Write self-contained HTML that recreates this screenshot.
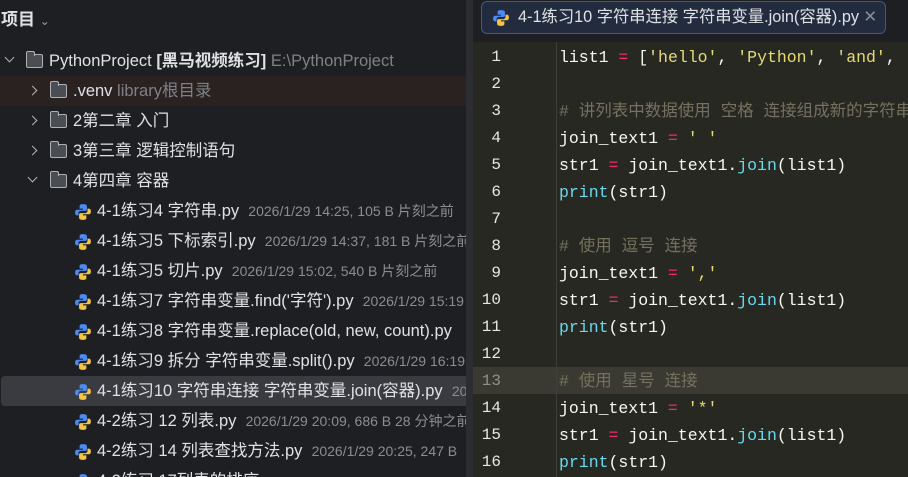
<!DOCTYPE html>
<html><head><meta charset="utf-8"><style>
*{margin:0;padding:0;box-sizing:border-box}
body{width:908px;height:477px;overflow:hidden;background:#1e1f22;font-family:"Liberation Sans","Noto Sans CJK SC",sans-serif;color:#dfe1e5;position:relative}
.left{position:absolute;left:0;top:0;width:466px;height:477px;background:#1e1f22;overflow:hidden}
.div{position:absolute;left:466px;top:0;width:7px;height:477px;background:#2b2d30}
.hdr{position:absolute;left:1px;top:5px;font-size:17px;font-weight:bold;color:#dfe1e5}
.row{position:absolute;left:0;width:466px;height:30px;font-size:16.5px;line-height:30px;white-space:nowrap;overflow:hidden}
.row .t{position:absolute;top:0}
.g{color:#8a8d93;font-size:14px}
.gl{color:#7e8187}
.chev{position:absolute;top:11px;width:7px;height:7px;border-right:1.5px solid #b0b3b8;border-bottom:1.5px solid #b0b3b8}
.r{transform:rotate(-45deg)}.d{transform:rotate(45deg);top:8px}
.fold{position:absolute;top:8px;width:17px;height:14px;border:1.5px solid #aeb1b6;border-radius:2px;background:#4a4d52}
.fold:before{content:"";position:absolute;left:-1.5px;top:-4px;width:7px;height:4px;border:1.5px solid #aeb1b6;border-bottom:none;border-radius:2px 2px 0 0;background:#4a4d52}
.py{position:absolute;top:7px;width:18px;height:18px}
.tab{position:absolute;left:481px;top:1px;width:405px;height:33px;background:#232c3f;border:1px solid #3b5a8c;border-radius:6px;font-size:16.3px;line-height:31px;color:#dfe1e5;padding-left:36px;white-space:nowrap}
.tab .x{position:absolute;right:8px;top:0;color:#8b8e94}
.ed{position:absolute;left:473px;top:42px;width:435px;height:435px;background:#272822}
.gut{position:absolute;left:556px;top:42px;width:1px;height:435px;background:#3e3f3a}
.cur{position:absolute;left:473px;top:367px;width:435px;height:27px;background:#3b3a32}
.ln{position:absolute;width:40px;text-align:right;left:461px;font-family:"Liberation Mono",monospace;font-size:16px;color:#e8e8e3;line-height:27px}
.code{position:absolute;left:559px;font-family:"Liberation Mono","Noto Sans CJK SC",monospace;font-size:16.5px;line-height:27px;color:#f8f8f2;white-space:pre}
.op{color:#f92672}.s{color:#e6db74}.f{color:#66d9ef}.c{color:#75715e}
</style></head><body>
<div class="left">
<div class="hdr">项目 <span style="font-weight:normal;color:#9da0a6;font-size:12px">&#8964;</span></div>
<div class="row" style="top:46px"><span class="chev d" style="left:6px"></span><span class="fold" style="left:26px"></span><span class="t" style="left:49px">PythonProject <b>[黑马视频练习]</b> <span class="gl">E:\PythonProject</span></span></div>
<div class="row" style="top:76px;background:#2a2220"><span class="chev r" style="left:29px"></span><span class="fold" style="left:50px"></span><span class="t" style="left:73px">.venv <span class="gl">library根目录</span></span></div>
<div class="row" style="top:106px"><span class="chev r" style="left:29px"></span><span class="fold" style="left:50px"></span><span class="t" style="left:73px">2第二章 入门</span></div>
<div class="row" style="top:136px"><span class="chev r" style="left:29px"></span><span class="fold" style="left:50px"></span><span class="t" style="left:73px">3第三章 逻辑控制语句</span></div>
<div class="row" style="top:166px"><span class="chev d" style="left:29px"></span><span class="fold" style="left:50px"></span><span class="t" style="left:73px">4第四章 容器</span></div>
<div class="row" style="top:196px"><svg class="py" style="left:74px" viewBox="0 0 16 16"><path d="M8 1C5 1 5 2 5 3v2h3v1H3C1.5 6 1 7 1 8.5S1.5 11 3 11h1V9c0-1 1-2 2-2h4c1 0 1.5-.5 1.5-1.5V3C11.5 1.5 10 1 8 1z" fill="#4b8bf5"/><path d="M8 15c3 0 3-1 3-2v-2H8v-1h5c1.5 0 2-1 2-2.5S14.5 5 13 5h-1v2c0 1-1 2-2 2H6c-1 0-1.5.5-1.5 1.5V13c0 1.5 1.5 2 3.5 2z" fill="#f4c542"/></svg><span class="t" style="left:97px">4-1练习4 字符串.py &nbsp;<span class="g">2026/1/29 14:25, 105 B 片刻之前</span></span></div>
<div class="row" style="top:226px"><svg class="py" style="left:74px" viewBox="0 0 16 16"><path d="M8 1C5 1 5 2 5 3v2h3v1H3C1.5 6 1 7 1 8.5S1.5 11 3 11h1V9c0-1 1-2 2-2h4c1 0 1.5-.5 1.5-1.5V3C11.5 1.5 10 1 8 1z" fill="#4b8bf5"/><path d="M8 15c3 0 3-1 3-2v-2H8v-1h5c1.5 0 2-1 2-2.5S14.5 5 13 5h-1v2c0 1-1 2-2 2H6c-1 0-1.5.5-1.5 1.5V13c0 1.5 1.5 2 3.5 2z" fill="#f4c542"/></svg><span class="t" style="left:97px">4-1练习5 下标索引.py &nbsp;<span class="g">2026/1/29 14:37, 181 B 片刻之前</span></span></div>
<div class="row" style="top:256px"><svg class="py" style="left:74px" viewBox="0 0 16 16"><path d="M8 1C5 1 5 2 5 3v2h3v1H3C1.5 6 1 7 1 8.5S1.5 11 3 11h1V9c0-1 1-2 2-2h4c1 0 1.5-.5 1.5-1.5V3C11.5 1.5 10 1 8 1z" fill="#4b8bf5"/><path d="M8 15c3 0 3-1 3-2v-2H8v-1h5c1.5 0 2-1 2-2.5S14.5 5 13 5h-1v2c0 1-1 2-2 2H6c-1 0-1.5.5-1.5 1.5V13c0 1.5 1.5 2 3.5 2z" fill="#f4c542"/></svg><span class="t" style="left:97px">4-1练习5 切片.py &nbsp;<span class="g">2026/1/29 15:02, 540 B 片刻之前</span></span></div>
<div class="row" style="top:286px"><svg class="py" style="left:74px" viewBox="0 0 16 16"><path d="M8 1C5 1 5 2 5 3v2h3v1H3C1.5 6 1 7 1 8.5S1.5 11 3 11h1V9c0-1 1-2 2-2h4c1 0 1.5-.5 1.5-1.5V3C11.5 1.5 10 1 8 1z" fill="#4b8bf5"/><path d="M8 15c3 0 3-1 3-2v-2H8v-1h5c1.5 0 2-1 2-2.5S14.5 5 13 5h-1v2c0 1-1 2-2 2H6c-1 0-1.5.5-1.5 1.5V13c0 1.5 1.5 2 3.5 2z" fill="#f4c542"/></svg><span class="t" style="left:97px">4-1练习7 字符串变量.find('字符').py &nbsp;<span class="g">2026/1/29 15:19</span></span></div>
<div class="row" style="top:316px"><svg class="py" style="left:74px" viewBox="0 0 16 16"><path d="M8 1C5 1 5 2 5 3v2h3v1H3C1.5 6 1 7 1 8.5S1.5 11 3 11h1V9c0-1 1-2 2-2h4c1 0 1.5-.5 1.5-1.5V3C11.5 1.5 10 1 8 1z" fill="#4b8bf5"/><path d="M8 15c3 0 3-1 3-2v-2H8v-1h5c1.5 0 2-1 2-2.5S14.5 5 13 5h-1v2c0 1-1 2-2 2H6c-1 0-1.5.5-1.5 1.5V13c0 1.5 1.5 2 3.5 2z" fill="#f4c542"/></svg><span class="t" style="left:97px">4-1练习8 字符串变量.replace(old, new, count).py</span></div>
<div class="row" style="top:346px"><svg class="py" style="left:74px" viewBox="0 0 16 16"><path d="M8 1C5 1 5 2 5 3v2h3v1H3C1.5 6 1 7 1 8.5S1.5 11 3 11h1V9c0-1 1-2 2-2h4c1 0 1.5-.5 1.5-1.5V3C11.5 1.5 10 1 8 1z" fill="#4b8bf5"/><path d="M8 15c3 0 3-1 3-2v-2H8v-1h5c1.5 0 2-1 2-2.5S14.5 5 13 5h-1v2c0 1-1 2-2 2H6c-1 0-1.5.5-1.5 1.5V13c0 1.5 1.5 2 3.5 2z" fill="#f4c542"/></svg><span class="t" style="left:97px">4-1练习9 拆分 字符串变量.split().py &nbsp;<span class="g">2026/1/29 16:19</span></span></div>
<div class="row" style="top:376px;left:1px;width:465px;background:#393b40;border-radius:4px 0 0 4px"><svg class="py" style="left:73px" viewBox="0 0 16 16"><path d="M8 1C5 1 5 2 5 3v2h3v1H3C1.5 6 1 7 1 8.5S1.5 11 3 11h1V9c0-1 1-2 2-2h4c1 0 1.5-.5 1.5-1.5V3C11.5 1.5 10 1 8 1z" fill="#4b8bf5"/><path d="M8 15c3 0 3-1 3-2v-2H8v-1h5c1.5 0 2-1 2-2.5S14.5 5 13 5h-1v2c0 1-1 2-2 2H6c-1 0-1.5.5-1.5 1.5V13c0 1.5 1.5 2 3.5 2z" fill="#f4c542"/></svg><span class="t" style="left:96px">4-1练习10 字符串连接 字符串变量.join(容器).py &nbsp;<span class="g">2026</span></span></div>
<div class="row" style="top:406px"><svg class="py" style="left:74px" viewBox="0 0 16 16"><path d="M8 1C5 1 5 2 5 3v2h3v1H3C1.5 6 1 7 1 8.5S1.5 11 3 11h1V9c0-1 1-2 2-2h4c1 0 1.5-.5 1.5-1.5V3C11.5 1.5 10 1 8 1z" fill="#4b8bf5"/><path d="M8 15c3 0 3-1 3-2v-2H8v-1h5c1.5 0 2-1 2-2.5S14.5 5 13 5h-1v2c0 1-1 2-2 2H6c-1 0-1.5.5-1.5 1.5V13c0 1.5 1.5 2 3.5 2z" fill="#f4c542"/></svg><span class="t" style="left:97px">4-2练习 12 列表.py &nbsp;<span class="g">2026/1/29 20:09, 686 B 28 分钟之前</span></span></div>
<div class="row" style="top:436px"><svg class="py" style="left:74px" viewBox="0 0 16 16"><path d="M8 1C5 1 5 2 5 3v2h3v1H3C1.5 6 1 7 1 8.5S1.5 11 3 11h1V9c0-1 1-2 2-2h4c1 0 1.5-.5 1.5-1.5V3C11.5 1.5 10 1 8 1z" fill="#4b8bf5"/><path d="M8 15c3 0 3-1 3-2v-2H8v-1h5c1.5 0 2-1 2-2.5S14.5 5 13 5h-1v2c0 1-1 2-2 2H6c-1 0-1.5.5-1.5 1.5V13c0 1.5 1.5 2 3.5 2z" fill="#f4c542"/></svg><span class="t" style="left:97px">4-2练习 14 列表查找方法.py &nbsp;<span class="g">2026/1/29 20:25, 247 B</span></span></div>
<div class="row" style="top:466px"><svg class="py" style="left:74px" viewBox="0 0 16 16"><path d="M8 1C5 1 5 2 5 3v2h3v1H3C1.5 6 1 7 1 8.5S1.5 11 3 11h1V9c0-1 1-2 2-2h4c1 0 1.5-.5 1.5-1.5V3C11.5 1.5 10 1 8 1z" fill="#4b8bf5"/></svg><span class="t" style="left:97px">4-2练习 17列表的排序</span></div>
</div>
<div class="div"></div>
<div class="tab"><svg style="position:absolute;left:10px;top:7px" width="18" height="18" viewBox="0 0 16 16"><path d="M8 1C5 1 5 2 5 3v2h3v1H3C1.5 6 1 7 1 8.5S1.5 11 3 11h1V9c0-1 1-2 2-2h4c1 0 1.5-.5 1.5-1.5V3C11.5 1.5 10 1 8 1z" fill="#4b8bf5"/><path d="M8 15c3 0 3-1 3-2v-2H8v-1h5c1.5 0 2-1 2-2.5S14.5 5 13 5h-1v2c0 1-1 2-2 2H6c-1 0-1.5.5-1.5 1.5V13c0 1.5 1.5 2 3.5 2z" fill="#f4c542"/></svg>4-1练习10 字符串连接 字符串变量.join(容器).py<span class="x">✕</span></div>
<div class="ed"></div>
<div class="cur"></div>
<div class="gut"></div>
<div class="ln" style="top:44px">1<br>2<br>3<br>4<br>5<br>6<br>7<br>8<br>9<br>10<br>11<br>12<br><span style="color:#8f908a">13</span><br>14<br>15<br>16</div>
<div class="code" style="top:44px">list1 <span class="op">=</span> [<span class="s">'hello'</span>, <span class="s">'Python'</span>, <span class="s">'and'</span>,

<span class="c"># 讲列表中数据使用 空格 连接组成新的字符串</span>
join_text1 <span class="op">=</span> <span class="s">' '</span>
str1 <span class="op">=</span> join_text1.<span class="f">join</span>(list1)
<span class="f">print</span>(str1)

<span class="c"># 使用 逗号 连接</span>
join_text1 <span class="op">=</span> <span class="s">','</span>
str1 <span class="op">=</span> join_text1.<span class="f">join</span>(list1)
<span class="f">print</span>(str1)

<span class="c"># 使用 星号 连接</span>
join_text1 <span class="op">=</span> <span class="s">'*'</span>
str1 <span class="op">=</span> join_text1.<span class="f">join</span>(list1)
<span class="f">print</span>(str1)</div>
</body></html>
